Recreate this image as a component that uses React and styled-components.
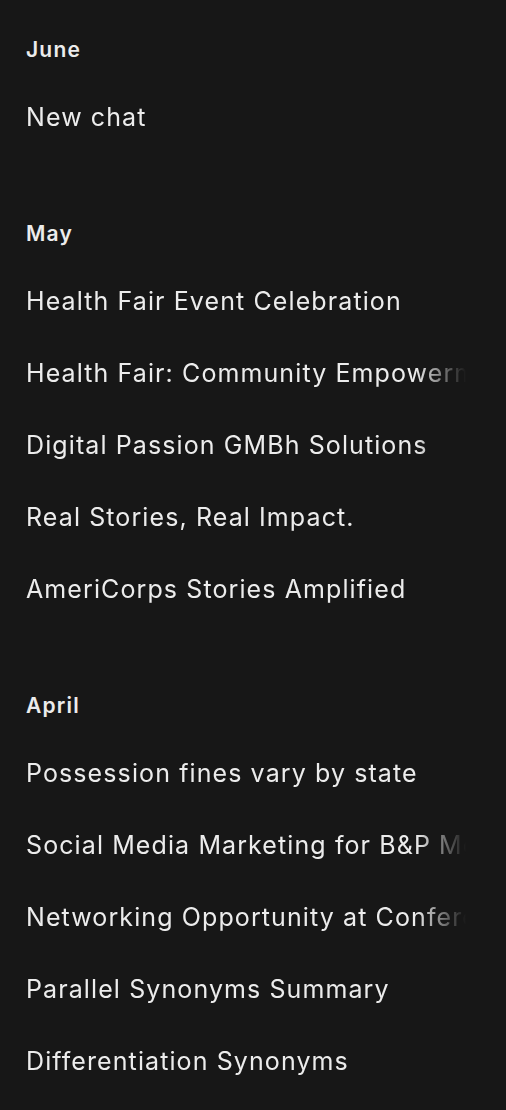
import React from "react";
import styled, { createGlobalStyle } from "styled-components";

const GlobalStyle = createGlobalStyle`
  html, body {
    margin: 0;
    padding: 0;
    background: #171717;
  }
  body {
    font-family: Inter, "Noto Sans", "Liberation Sans", sans-serif;
    -webkit-font-smoothing: antialiased;
  }
`;

const Sidebar = styled.nav`
  width: 506px;
  min-height: 1110px;
  box-sizing: border-box;
  padding: 17px 40px 0 26px;
  background: #171717;
  display: flex;
  flex-direction: column;
  gap: 48px;
`;

const Section = styled.section`
  display: flex;
  flex-direction: column;
`;

const Heading = styled.h3`
  margin: 0;
  height: 64px;
  display: flex;
  align-items: center;
  font-size: 21px;
  font-weight: 600;
  letter-spacing: 1.2px;
  color: #ececec;
`;

const Item = styled.div`
  height: 72px;
  display: flex;
  align-items: center;
  font-size: 25px;
  font-weight: 400;
  letter-spacing: 1.1px;
  color: #ececec;
  white-space: nowrap;
  overflow: hidden;
  -webkit-mask-image: linear-gradient(to right, #000 calc(100% - 50px), transparent 100%);
  mask-image: linear-gradient(to right, #000 calc(100% - 50px), transparent 100%);
`;

const history = [
  { month: "June", chats: ["New chat"] },
  {
    month: "May",
    chats: [
      "Health Fair Event Celebration",
      "Health Fair: Community Empowerment",
      "Digital Passion GMBh Solutions",
      "Real Stories, Real Impact.",
      "AmeriCorps Stories Amplified",
    ],
  },
  {
    month: "April",
    chats: [
      "Possession fines vary by state",
      "Social Media Marketing for B&P Media",
      "Networking Opportunity at Conference",
      "Parallel Synonyms Summary",
      "Differentiation Synonyms",
    ],
  },
];

export default function App() {
  return (
    <>
      <GlobalStyle />
      <Sidebar>
        {history.map((group) => (
          <Section key={group.month}>
            <Heading>{group.month}</Heading>
            {group.chats.map((title) => (
              <Item key={title}>{title}</Item>
            ))}
          </Section>
        ))}
      </Sidebar>
    </>
  );
}
